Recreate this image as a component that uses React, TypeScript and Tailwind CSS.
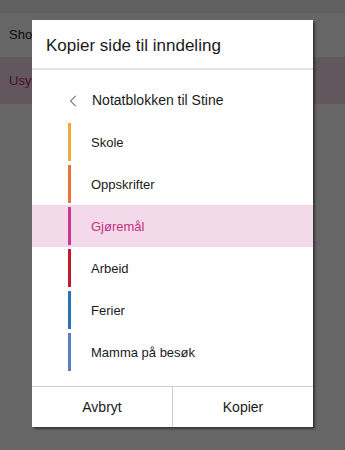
import { ChevronLeft } from 'lucide-react';

const sections = [
  { name: 'Skole', color: 'bg-[#f2a93b]' },
  { name: 'Oppskrifter', color: 'bg-[#e97439]' },
  { name: 'Gjøremål', color: 'bg-[#c9398b]', active: true },
  { name: 'Arbeid', color: 'bg-[#c01a2c]' },
  { name: 'Ferier', color: 'bg-[#2b73b9]' },
  { name: 'Mamma på besøk', color: 'bg-[#5b7cc0]' },
];

export default function App() {
  return (
    <div className="relative h-[450px] w-[345px] overflow-hidden bg-white font-['Liberation_Sans',Arial,sans-serif]">
      {/* page behind the dialog */}
      <div className="h-[12px] bg-[#f0f0f0]" />
      <div className="flex h-[46px] items-center border-y border-[#e6e6e6] pl-[9px] text-[13px] text-[#222]">
        Shopping
      </div>
      <div className="flex h-[46px] items-center bg-[#f3d9e9] pl-[9px] text-[13px] text-[#b02a70]">
        Usystematisert
      </div>

      {/* overlay */}
      <div className="absolute inset-0 flex justify-center bg-black/60 pt-[20px]">
        <div className="flex h-[407px] w-[281px] flex-col bg-white shadow-[2px_2px_2px_rgba(0,0,0,0.45)]">
          <div className="flex h-[50px] shrink-0 items-center border-b-2 border-[#e3e3e3] pl-[14px] pt-[3px] text-[17px] text-[#1a1a1a]">
            Kopier side til inndeling
          </div>

          <div className="flex h-[51px] shrink-0 items-center pl-[31px] pt-[10px] text-[14px] text-[#1a1a1a]">
            <ChevronLeft size={20} strokeWidth={1.2} className="text-[#333]" />
            <span className="ml-[9px]">Notatblokken til Stine</span>
          </div>

          <div className="flex flex-col">
            {sections.map((s) => (
              <div
                key={s.name}
                className={`flex h-[42px] items-center ${s.active ? 'bg-[#f3d9e9] text-[#c3357f]' : 'text-[#1a1a1a]'}`}
              >
                <div className="ml-[36px] flex h-full items-center py-[2px]">
                  <div className={`h-full w-[3px] ${s.color}`} />
                </div>
                <span className="ml-[20px] pt-[1px] text-[13px]">{s.name}</span>
              </div>
            ))}
          </div>

          <div className="mt-auto flex h-[41px] shrink-0 border-t border-[#cfcfcf] text-[14px] text-[#1a1a1a]">
            <button className="flex flex-1 items-center justify-center border-r border-[#cfcfcf]">Avbryt</button>
            <button className="flex flex-1 items-center justify-center">Kopier</button>
          </div>
        </div>
      </div>
    </div>
  );
}
